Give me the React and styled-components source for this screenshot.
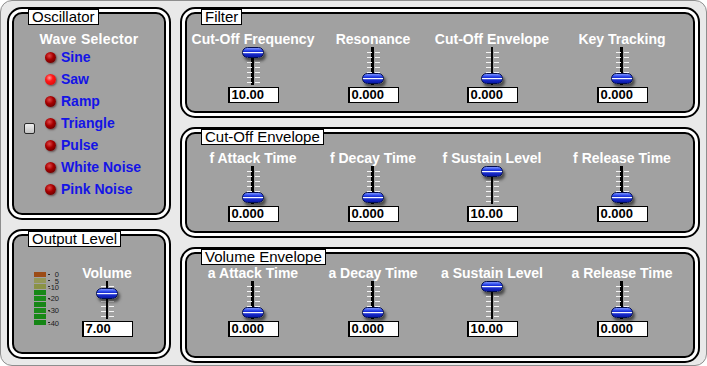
import styled, { createGlobalStyle } from "styled-components";

const GlobalStyle = createGlobalStyle`
  html, body {
    margin: 0;
    padding: 0;
    background: #ffffff;
  }
  body {
    font-family: "Liberation Sans", Arial, sans-serif;
  }
`;

const Window = styled.div`
  box-sizing: border-box;
  width: 707px;
  height: 366px;
  border: 1px solid #8e8e8e;
  border-radius: 12px;
  background: #e9e9e9;
  padding: 6px;
  display: grid;
  grid-template-columns: 164px 520px;
  column-gap: 9px;
`;

const Column = styled.div`
  display: grid;
  grid-template-rows: ${(p) => p.$rows};
  row-gap: 9px;
  align-content: start;
`;

const Frame = styled.section`
  position: relative;
  box-sizing: border-box;
  border: 2px solid #000;
  border-radius: 15px;
  background: #ffffff;
  padding: 3px;
  display: flex;
`;

const Body = styled.div`
  flex: 1;
  box-sizing: border-box;
  border: 2px solid #000;
  border-radius: 10px;
  background: #a1a1a1;
  padding-top: ${(p) => p.$pad}px;
  padding-left: ${(p) => p.$left || 0}px;
  display: ${(p) => (p.$row ? "flex" : "block")};
`;

const Title = styled.div`
  position: absolute;
  top: 0;
  left: 19px;
  height: 16px;
  box-sizing: border-box;
  padding: 0 3px;
  border: 1px solid #000;
  background: #ffffff;
  color: #000;
  font-size: 15px;
  line-height: 14px;
  white-space: nowrap;
`;

const Controls = styled.div`
  display: grid;
  grid-template-columns: 132px 108px 130px 130px;
`;

const Control = styled.div`
  display: flex;
  flex-direction: column;
  align-items: center;
  width: ${(p) => (p.$width ? p.$width + "px" : "auto")};
`;

const Label = styled.div`
  color: #ffffff;
  font-size: 14px;
  font-weight: bold;
  line-height: 16px;
  white-space: nowrap;
`;

const Slider = styled.div`
  position: relative;
  width: 24px;
  height: 38px;
  background: linear-gradient(
    to right,
    transparent 10.5px,
    #000 10.5px,
    #000 13.5px,
    transparent 13.5px
  );
  display: flex;
  flex-direction: column;
  align-items: center;
  gap: 4px;
  padding-top: 5px;
  box-sizing: border-box;
`;

const Tick = styled.div`
  width: 13px;
  height: 1px;
  background: linear-gradient(
    to right,
    #f4f4f4 5px,
    transparent 5px,
    transparent 8px,
    #f4f4f4 8px
  );
`;

const Thumb = styled.div`
  position: absolute;
  left: 1px;
  width: 22px;
  height: 11px;
  box-sizing: border-box;
  border: 1px solid #000c50;
  border-radius: 6px;
  background: linear-gradient(
    #7f95ff 0%,
    #2c48ec 28%,
    #1a2ed2 40%,
    #ffffff 44%,
    #e8ecff 58%,
    #1a2ed2 62%,
    #0a18a6 100%
  );
  box-shadow: 2px 3px 3px rgba(0, 0, 0, 0.55);
`;

const Field = styled.div`
  box-sizing: border-box;
  width: 51px;
  height: 16px;
  margin-top: 2px;
  padding-left: 2px;
  background: #ffffff;
  border: 1px solid #000;
  border-left-width: 2px;
  color: #000;
  font-size: 13px;
  font-weight: bold;
  line-height: 14px;
`;

const Heading = styled.div`
  color: #ffffff;
  font-size: 14px;
  font-weight: bold;
  line-height: 14px;
  text-align: center;
  letter-spacing: 0.3px;
`;

const Selector = styled.div`
  display: flex;
  align-items: center;
  padding-left: 10px;
`;

const Check = styled.div`
  width: 11px;
  height: 11px;
  box-sizing: border-box;
  margin: 10px 10px 0 0;
  border: 1px solid #2a2a2a;
  border-radius: 2px;
  background: linear-gradient(#eeeeee, #c4c4c4);
`;

const Radios = styled.div`
  display: flex;
  flex-direction: column;
`;

const Radio = styled.div`
  display: flex;
  align-items: center;
  gap: 5px;
  height: 22px;
  color: #1414e6;
  font-size: 14px;
  font-weight: bold;
  white-space: nowrap;
`;

const Led = styled.span`
  width: 11px;
  height: 11px;
  border-radius: 50%;
  background: ${(p) =>
    p.$on
      ? "radial-gradient(circle at 40% 35%, #ff9a9a 0, #ff1a1a 35%, #d00000 100%)"
      : "radial-gradient(circle at 40% 35%, #e04848 0, #a80000 40%, #4a0000 100%)"};
  box-shadow: 1px 1px 2px rgba(40, 0, 0, 0.5);
`;

const Meter = styled.svg`
  margin-top: 5px;
  flex: none;
`;

const Gap = styled.div`
  width: 19px;
  flex: none;
`;

const SliderControl = ({ label, value, text, width }) => (
  <Control $width={width}>
    <Label>{label}</Label>
    <Slider>
      {Array.from({ length: 7 }).map((_, i) => (
        <Tick key={i} />
      ))}
      <Thumb style={{ top: (1 - value) * 26 + "px" }} />
    </Slider>
    <Field>{text}</Field>
  </Control>
);

const Panel = ({ title, pad, children, ...rest }) => (
  <Frame>
    <Body $pad={pad} {...rest}>
      {children}
    </Body>
    <Title>{title}</Title>
  </Frame>
);

const waves = ["Sine", "Saw", "Ramp", "Triangle", "Pulse", "White Noise", "Pink Noise"];

const barColors = [
  "#9c4c16",
  "#949858",
  "#8a9246",
  "#178817",
  "#1a8c1a",
  "#168616",
  "#1a8a1a",
  "#178817",
  "#158515",
];

// label, tick y, text baseline y
const scale = [
  ["0", 4, 7],
  ["5", 10, 13.5],
  ["-10", 16, 19.5],
  ["-20", 28, 31],
  ["-30", 40, 43],
  ["-40", 52, 56],
];

const filter = [
  { label: "Cut-Off Frequency", value: 1, text: "10.00" },
  { label: "Resonance", value: 0, text: "0.000" },
  { label: "Cut-Off Envelope", value: 0, text: "0.000" },
  { label: "Key Tracking", value: 0, text: "0.000" },
];

const fEnv = [
  { label: "f Attack Time", value: 0, text: "0.000" },
  { label: "f Decay Time", value: 0, text: "0.000" },
  { label: "f Sustain Level", value: 1, text: "10.00" },
  { label: "f Release Time", value: 0, text: "0.000" },
];

const aEnv = [
  { label: "a Attack Time", value: 0, text: "0.000" },
  { label: "a Decay Time", value: 0, text: "0.000" },
  { label: "a Sustain Level", value: 1, text: "10.00" },
  { label: "a Release Time", value: 0, text: "0.000" },
];

const App = () => {
  return (
    <>
      <GlobalStyle />
      <Window>
        <Column $rows="213px 130px">
          <Panel title="Oscillator" pad={18}>
            <Heading>Wave Selector</Heading>
            <Selector>
              <Check />
              <Radios>
                {waves.map((w) => (
                  <Radio key={w}>
                    <Led $on={w === "Saw"} />
                    {w}
                  </Radio>
                ))}
              </Radios>
            </Selector>
          </Panel>
          <Panel title="Output Level" pad={29} $row $left={20}>
            <Meter width="28" height="58" viewBox="0 0 28 58">
              {barColors.map((c, i) => (
                <rect key={i} x="0" y={2 + i * 6} width="12" height="5" fill={c} />
              ))}
              {scale.map(([t, ty, by]) => (
                <g key={t}>
                  <rect x="14" y={ty} width="2" height="1" fill="#222" />
                  <text
                    x="25"
                    y={by}
                    fontSize="7.5"
                    fontFamily="Liberation Sans, Arial, sans-serif"
                    textAnchor="end"
                    fill="#1a1a1a"
                  >
                    {t}
                  </text>
                </g>
              ))}
            </Meter>
            <Gap />
            <SliderControl label="Volume" value={0.72} text="7.00" width={52} />
          </Panel>
        </Column>
        <Column $rows="111px 111px 116px">
          <Panel title="Filter" pad={17}>
            <Controls>
              {filter.map((c) => (
                <SliderControl key={c.label} {...c} />
              ))}
            </Controls>
          </Panel>
          <Panel title="Cut-Off Envelope" pad={16}>
            <Controls>
              {fEnv.map((c) => (
                <SliderControl key={c.label} {...c} />
              ))}
            </Controls>
          </Panel>
          <Panel title="Volume Envelope" pad={11}>
            <Controls>
              {aEnv.map((c) => (
                <SliderControl key={c.label} {...c} />
              ))}
            </Controls>
          </Panel>
        </Column>
      </Window>
    </>
  );
};

export default App;
